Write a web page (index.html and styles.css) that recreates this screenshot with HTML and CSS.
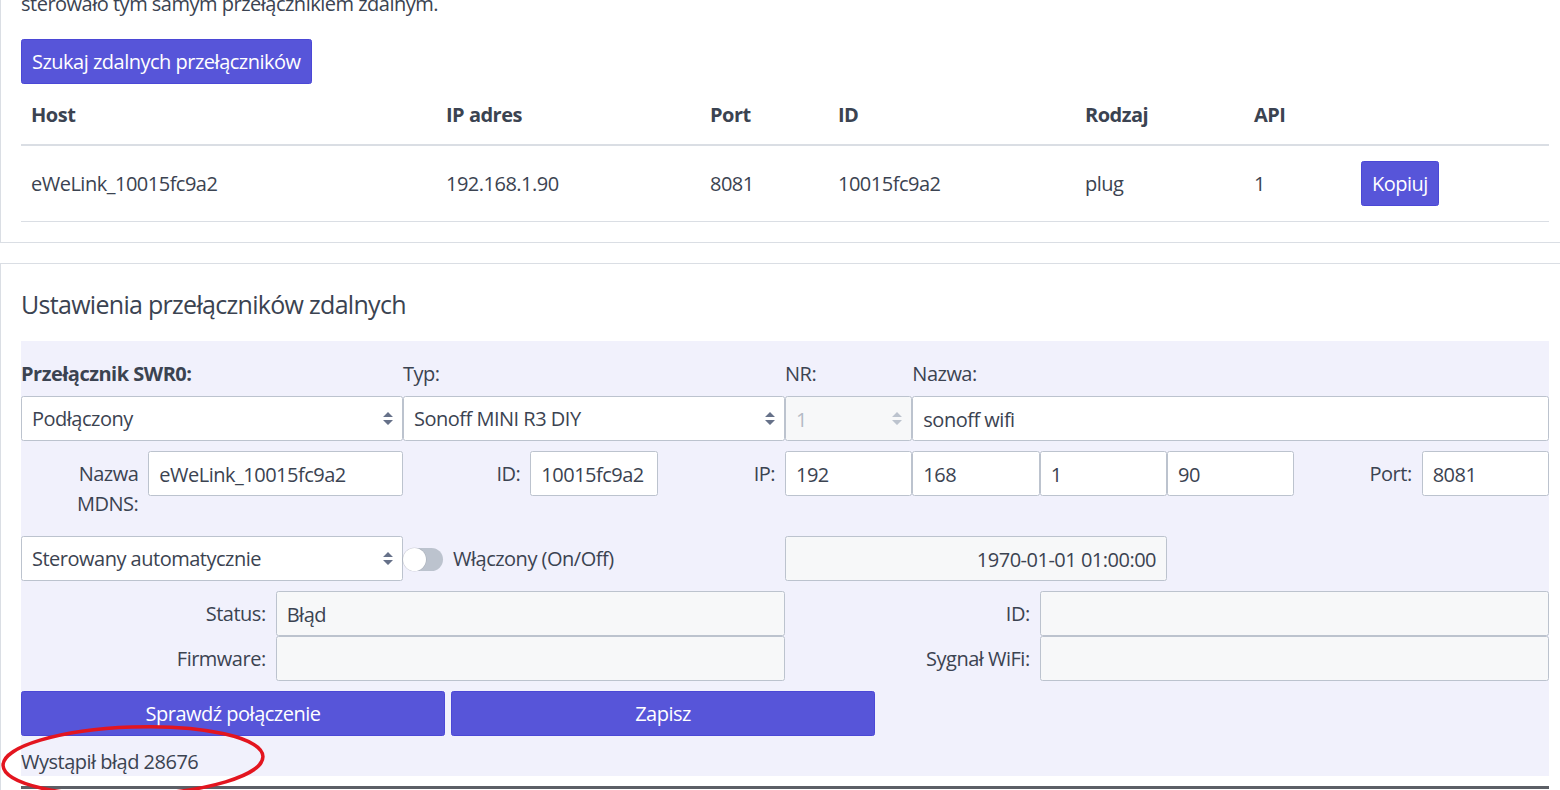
FILE: index.html
```html
<!DOCTYPE html>
<html lang="pl">
<head>
<meta charset="utf-8">
<title>Przełączniki zdalne</title>
<link rel="stylesheet" href="styles.css">
</head>
<body>
<div class="page">
  <section class="card card-search">
    <p class="intro">sterowało tym samym przełącznikiem zdalnym.</p>
    <button class="btn">Szukaj zdalnych przełączników</button>
    <table class="table">
      <colgroup>
        <col class="c-host"><col class="c-ip"><col class="c-port"><col class="c-id"><col class="c-kind"><col class="c-api"><col class="c-act">
      </colgroup>
      <thead>
        <tr><th>Host</th><th>IP adres</th><th>Port</th><th>ID</th><th>Rodzaj</th><th>API</th><th></th></tr>
      </thead>
      <tbody>
        <tr><td>eWeLink_10015fc9a2</td><td>192.168.1.90</td><td>8081</td><td>10015fc9a2</td><td>plug</td><td>1</td><td><button class="btn">Kopiuj</button></td></tr>
      </tbody>
    </table>
  </section>

  <section class="card card-settings">
    <h5 class="card-title">Ustawienia przełączników zdalnych</h5>
    <div class="panel">
      <div class="grid row">
        <div class="cell span3">
          <div class="label bold">Przełącznik SWR0:</div>
          <div class="select">
            <select class="input"><option>Podłączony</option></select>
            <svg class="caret" viewBox="0 0 10 13"><path d="M5 0 L10 5 H0 Z M5 13 L10 8 H0 Z" fill="#667189"/></svg>
          </div>
        </div>
        <div class="cell span3">
          <div class="label">Typ:</div>
          <div class="select">
            <select class="input"><option>Sonoff MINI R3 DIY</option></select>
            <svg class="caret" viewBox="0 0 10 13"><path d="M5 0 L10 5 H0 Z M5 13 L10 8 H0 Z" fill="#667189"/></svg>
          </div>
        </div>
        <div class="cell span1">
          <div class="label">NR:</div>
          <div class="select">
            <input class="input disabled muted" value="1" disabled>
            <svg class="caret" viewBox="0 0 10 13"><path d="M5 0 L10 5 H0 Z M5 13 L10 8 H0 Z" fill="#bcc3ce"/></svg>
          </div>
        </div>
        <div class="cell span5">
          <div class="label">Nazwa:</div>
          <input class="input" value="sonoff wifi">
        </div>
      </div>

      <div class="grid row">
        <div class="label right span1">Nazwa MDNS:</div>
        <input class="input span2" value="eWeLink_10015fc9a2">
        <div class="label right span1">ID:</div>
        <input class="input span1" value="10015fc9a2">
        <div class="label right span1">IP:</div>
        <input class="input span1" value="192">
        <input class="input span1" value="168">
        <input class="input span1" value="1">
        <input class="input span1" value="90">
        <div class="label right span1">Port:</div>
        <input class="input span1" value="8081">
      </div>

      <div class="grid row">
        <div class="select span3">
          <select class="input"><option>Sterowany automatycznie</option></select>
          <svg class="caret" viewBox="0 0 10 13"><path d="M5 0 L10 5 H0 Z M5 13 L10 8 H0 Z" fill="#667189"/></svg>
        </div>
        <label class="switch span3"><span class="track"><span class="knob"></span></span>Włączony (On/Off)</label>
        <input class="input disabled span3 tright" value="1970-01-01 01:00:00" disabled>
      </div>

      <div class="grid row">
        <div class="label right span2">Status:</div>
        <input class="input disabled span4" value="Błąd" disabled>
        <div class="label right span2">ID:</div>
        <input class="input disabled span4" value="" disabled>
        <div class="label right span2">Firmware:</div>
        <input class="input disabled span4" value="" disabled>
        <div class="label right span2">Sygnał WiFi:</div>
        <input class="input disabled span4" value="" disabled>
      </div>

      <div class="actions row">
        <button class="btn wide">Sprawdź połączenie</button>
        <button class="btn wide">Zapisz</button>
      </div>

      <div class="message">Wystąpił błąd 28676</div>
    </div>
    <div class="divider"></div>
  </section>
</div>
<svg class="annot" viewBox="0 0 280 90" width="280" height="90">
  <ellipse cx="133" cy="45" rx="130" ry="34" transform="rotate(-2 133 45)" fill="none" stroke="#e3151f" stroke-width="3.5"/>
</svg>
</body>
</html>
```
FILE: styles.css
```css
html, body {
  margin: 0;
  padding: 0;
  background: #fff;
  overflow: hidden;
  height: 790px;
}
body {
  font-family: "Open Sans", "Noto Sans", sans-serif;
  font-size: 20px;
  line-height: 30px;
  letter-spacing: -0.5px;
  color: #3b4351;
  position: relative;
}
.page {
  width: 1570px;
  margin-top: -33px;
}
.card {
  border: 1px solid #dadee4;
  background: #fff;
  padding: 20px;
  box-sizing: border-box;
  width: 1570px;
}
.card-search {
  padding-top: 21px;
}
.card + .card {
  margin-top: 20px;
}
.intro {
  margin: 0 0 20px;
}
.btn {
  font-family: inherit;
  font-size: 20px;
  line-height: 30px;
  letter-spacing: -0.5px;
  height: 45px;
  padding: 0 10px;
  color: #fff;
  background: #5755d9;
  border: 1px solid #4b48d6;
  border-radius: 2.5px;
  cursor: pointer;
  display: inline-block;
  vertical-align: top;
}
.table {
  border-collapse: collapse;
  border-spacing: 0;
  width: 1528px;
  table-layout: fixed;
  text-align: left;
}
.c-host { width: 415px; }
.c-ip { width: 264px; }
.c-port { width: 128px; }
.c-id { width: 247px; }
.c-kind { width: 169px; }
.c-api { width: 107px; }
.c-act { width: 198px; }
.table th, .table td {
  padding: 16px 10px 14px;
  line-height: 30px;
  vertical-align: middle;
}
.table td {
  padding: 15px 10px;
}
.table th {
  font-weight: 700;
  border-bottom: 2px solid #dadee4;
}
.table td {
  border-bottom: 1px solid #dadee4;
}
.card-settings {
  padding-top: 25px;
}
.card-title {
  margin: 0 0 22px;
  font-size: 25px;
  line-height: 30px;
  font-weight: 400;
  letter-spacing: -0.7px;
}
.panel {
  background: #f1f1fc;
  padding-top: 10px;
}
.grid {
  display: grid;
  grid-template-columns: repeat(12, 1fr);
}
.row {
  margin-bottom: 10px;
}
.span1 { grid-column: span 1; }
.span2 { grid-column: span 2; }
.span3 { grid-column: span 3; }
.span4 { grid-column: span 4; }
.span5 { grid-column: span 5; }
.cell {
  display: flex;
  flex-direction: column;
  min-width: 0;
}
.label {
  padding: 8px 0 7px;
  line-height: 30px;
}
.label.right {
  text-align: right;
  padding-right: 10px;
}
.bold { font-weight: 700; }
.input {
  display: block;
  box-sizing: border-box;
  width: 100%;
  min-width: 0;
  height: 45px;
  margin: 0;
  padding: 1px 10px 0;
  font-family: inherit;
  font-size: 20px;
  line-height: 30px;
  letter-spacing: -0.5px;
  color: #3b4351;
  background: #fff;
  border: 1px solid #bcc3ce;
  border-radius: 2.5px;
  outline: none;
  -webkit-appearance: none;
  appearance: none;
}
select.input {
  padding-right: 30px;
}
.input.disabled {
  background: #f7f8f9;
  color: #3b4351;
  -webkit-text-fill-color: #3b4351;
  opacity: 1;
}
.input.muted {
  color: #bcc3ce;
  -webkit-text-fill-color: #b4bbc6;
}
.tright { text-align: right; }
.select {
  position: relative;
  min-width: 0;
}
.caret {
  position: absolute;
  right: 10px;
  top: 16px;
  width: 10px;
  height: 13px;
  pointer-events: none;
}
.switch {
  display: flex;
  align-items: center;
  gap: 10px;
  height: 45px;
  padding-top: 1px;
  box-sizing: border-box;
}
.track {
  position: relative;
  width: 40px;
  height: 23px;
  border-radius: 12px;
  background: #bcc3ce;
  flex: none;
}
.knob {
  position: absolute;
  left: 0;
  top: 0;
  width: 23px;
  height: 23px;
  border-radius: 50%;
  background: #fff;
  box-shadow: 0 0 0 0.5px rgba(0,0,0,0.12);
}
.actions {
  display: flex;
  gap: 6px;
}
.btn.wide {
  width: 424px;
  text-align: center;
  padding-top: 1px;
}
.message {
  line-height: 30px;
  padding-top: 1px;
  height: 30px;
  box-sizing: border-box;
}
.divider {
  margin-top: 10px;
  border-top: 3px solid #5c5f66;
}
.annot {
  position: absolute;
  left: 0;
  top: 716px;
  pointer-events: none;
}
```
